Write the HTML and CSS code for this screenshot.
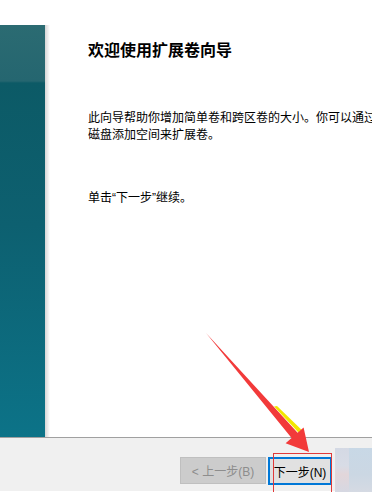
FILE: index.html
```html
<!DOCTYPE html>
<html lang="zh-CN">
<head>
<meta charset="utf-8">
<link rel="stylesheet" href="styles.css">
</head>
<body>
<div class="window">
  <div class="main">
    <div class="side"></div>
    <div class="shadow"></div>
    <div class="content">
      <h1 class="title">欢迎使用扩展卷向导</h1>
      <p class="desc">此向导帮助你增加简单卷和跨区卷的大小。你可以通过<br>磁盘添加空间来扩展卷。</p>
      <p class="hint">单击“下一步”继续。</p>
    </div>
  </div>
  <div class="footer">
    <button class="btn btn-disabled" disabled>&lt; 上一步(B)</button>
    <button class="btn btn-next">下一步(N)</button>
    <div class="blur">
      <div class="blur-a"></div>
      <div class="blur-b"></div>
    </div>
  </div>
  <div class="highlight"></div>
  <svg class="arrow" width="372" height="492" viewBox="0 0 372 492">
    <polygon points="274,406.5 298.5,432.5 301.5,429.8 277,406" fill="#f2e600"/>
    <polygon points="206,333 297.6,432.8 303.6,427.6 309,452 285.6,443.2 291.6,438" fill="#f23a3a"/>
  </svg>
</div>
</body>
</html>
```
FILE: styles.css
```css
html, body {
  margin: 0;
  padding: 0;
  background: #ffffff;
  overflow: hidden;
}
.window {
  position: relative;
  width: 372px;
  height: 492px;
  overflow: hidden;
  font-family: "Liberation Sans", "Noto Sans CJK SC", sans-serif;
}
.main {
  display: flex;
  height: 437px;
  background: #ffffff;
}
.side {
  width: 45px;
  margin-top: 25px;
  flex: none;
  background: linear-gradient(180deg, #2b6b72 0px, #256670 56px, #0c5a66 58px, #0d6070 200px, #0c7388 412px);
}
.shadow {
  width: 5px;
  margin-top: 25px;
  flex: none;
  background: linear-gradient(90deg, #d6d6d6, #f2f2f2 70%, #ffffff);
}
.content {
  flex: 1;
  padding-left: 38px;
  white-space: nowrap;
  color: #000000;
}
.title {
  margin: 40px 0 0 0;
  font-size: 16px;
  font-weight: bold;
  line-height: 22px;
}
.desc {
  margin: 48px 0 0 0;
  font-size: 12px;
  line-height: 17px;
}
.hint {
  margin: 46px 0 0 0;
  font-size: 12px;
  line-height: 17px;
}
.footer {
  display: flex;
  align-items: flex-start;
  height: 54px;
  border-top: 1px solid #a0a0a0;
  background: #f0f0f0;
  padding-left: 180px;
  box-sizing: border-box;
}
.btn {
  margin-top: 19px;
  height: 28px;
  box-sizing: border-box;
  font-family: "Liberation Sans", "Noto Sans CJK SC", sans-serif;
  font-size: 12px;
  padding: 0;
}
.btn-disabled {
  width: 86px;
  height: 27px;
  background: #cccccc;
  border: 1px solid #bfbfbf;
  color: #8d8d8d;
}
.btn-next {
  width: 64px;
  margin-left: 2px;
  background: #e1e1e1;
  border: 2px solid #0078d7;
  color: #000000;
}
.blur {
  margin-left: 3px;
  margin-top: 10px;
  width: 37px;
  height: 44px;
  display: flex;
}
.blur-a {
  width: 14px;
  background: linear-gradient(180deg, #d4d9e4 0%, #d8dce6 40%, #e2d6da 60%, #d6d8e2 100%);
}
.blur-b {
  flex: 1;
  background: linear-gradient(180deg, #c8d8e6 0%, #cbd7e3 60%, #d5dae3 100%);
}
.highlight {
  position: absolute;
  left: 273px;
  top: 453px;
  width: 57px;
  height: 45px;
  border: 1px solid #e03a3a;
}
.arrow {
  position: absolute;
  left: 0;
  top: 0;
  pointer-events: none;
}
```
